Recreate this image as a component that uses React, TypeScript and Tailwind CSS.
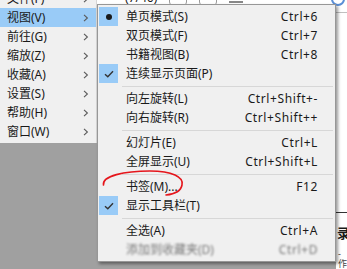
import React from "react";

type SubItem =
  | { kind: "sep" }
  | {
      kind: "item";
      label: string;
      shortcut?: string;
      mark?: "dot" | "check";
      blurred?: boolean;
    };

const leftItems = [
  "文件(F)",
  "视图(V)",
  "前往(G)",
  "缩放(Z)",
  "收藏(A)",
  "设置(S)",
  "帮助(H)",
  "窗口(W)",
];

const subItems: SubItem[] = [
  { kind: "item", label: "单页模式(S)", shortcut: "Ctrl+6", mark: "dot" },
  { kind: "item", label: "双页模式(F)", shortcut: "Ctrl+7" },
  { kind: "item", label: "书籍视图(B)", shortcut: "Ctrl+8" },
  { kind: "item", label: "连续显示页面(P)", mark: "check" },
  { kind: "sep" },
  { kind: "item", label: "向左旋转(L)", shortcut: "Ctrl+Shift+-" },
  { kind: "item", label: "向右旋转(R)", shortcut: "Ctrl+Shift++" },
  { kind: "sep" },
  { kind: "item", label: "幻灯片(E)", shortcut: "Ctrl+L" },
  { kind: "item", label: "全屏显示(U)", shortcut: "Ctrl+Shift+L" },
  { kind: "sep" },
  { kind: "item", label: "书签(M)...", shortcut: "F12" },
  { kind: "item", label: "显示工具栏(T)", mark: "check" },
  { kind: "sep" },
  { kind: "item", label: "全选(A)", shortcut: "Ctrl+A" },
  { kind: "item", label: "添加到收藏夹(D)", shortcut: "Ctrl+D", blurred: true },
];

function Chevron() {
  return (
    <svg width="6" height="8" viewBox="0 0 6 8" className="text-[#5a5a5a]">
      <path d="M1 0.8 L4.4 4 L1 7.2" fill="none" stroke="currentColor" strokeWidth="1.1" />
    </svg>
  );
}

function Mark({ type }: { type?: "dot" | "check" }) {
  if (!type) return <div className="w-[19px] h-[19px]" />;
  return (
    <div className="w-[19px] h-[19px] bg-[#99cbf7] flex items-center justify-center">
      {type === "dot" ? (
        <div className="w-[6px] h-[6px] rounded-full bg-[#1a1a1a]" />
      ) : (
        <svg width="10" height="8" viewBox="0 0 10 8">
          <path d="M1 4.2 L3.8 6.8 L9 1.2" fill="none" stroke="#333" strokeWidth="1.4" />
        </svg>
      )}
    </div>
  );
}

export default function App() {
  return (
    <div
      className="relative w-[347px] h-[269px] overflow-hidden bg-[#a0a0a0] text-[#1a1a1a]"
      style={{ fontFamily: '"Noto Sans", "Noto Sans CJK SC", sans-serif' }}
    >
      {/* application behind the menus */}
      <div className="flex flex-col h-full">
        <div className="h-[13px] bg-white border-b border-[#c0c0c0] flex items-start gap-3 pl-[125px] overflow-hidden">
          <span className="text-[12px] -mt-[10px] leading-[16px]">(7/46)</span>
          <div className="w-[18px] h-[18px] -mt-[12px] border border-[#9a9a9a] rounded-sm" />
          <div className="w-[18px] h-[18px] -mt-[12px] border border-[#9a9a9a] rounded-sm" />
          <div className="w-[14px] h-[2px] mt-[1px] bg-[#888]" />
          <div className="ml-auto mr-[2px] w-[14px] h-[14px] -mt-[8px] rounded-full border-2 border-[#5b8fd6]" />
        </div>
        <div className="flex flex-1">
          <div className="flex-1 bg-[#a0a0a0]" />
          <div className="w-[11px] bg-white flex flex-col">
            <div className="h-[199px]" />
            <div className="h-[1px] bg-[#333]" />
            <div className="mt-[13px] text-[13px] font-bold leading-[14px] pl-[1px]">录</div>
            <div className="mt-auto text-[9px] leading-[10px] pl-[2px] text-[#444]">- 作</div>
          </div>
        </div>
      </div>

      {/* main menu */}
      <div className="absolute left-0 top-[-11px] w-[97px] bg-[#f0f0f0] border-r border-[#d6d6d6] pb-[2px]">
        {leftItems.map((label, i) => (
          <div
            key={label}
            className={`h-[19px] flex items-center pl-[7px] pr-[7px] ${
              i === 1 ? "bg-[#99cbf7]" : ""
            }`}
          >
            <span className="flex-1 text-[12px] leading-none whitespace-nowrap">{label}</span>
            <Chevron />
          </div>
        ))}
      </div>

      {/* view submenu */}
      <div className="absolute left-[97px] top-[4px] w-[239px] bg-[#f0f0f0] border border-[#979797] py-[2px] shadow-[2px_2px_3px_rgba(0,0,0,0.4)]">
        {subItems.map((it, i) =>
          it.kind === "sep" ? (
            <div key={i} className="h-[6px] flex items-center pl-[24px] pr-[2px]">
              <div className="h-[1px] w-full bg-[#d7d7d7]" />
            </div>
          ) : (
            <div
              key={i}
              className={`h-[19px] flex items-center pl-[1px] pr-[17px] ${
                it.blurred ? "blur-[1px] text-[#777]" : ""
              }`}
            >
              <Mark type={it.mark} />
              <span className="ml-[8px] flex-1 text-[12px] leading-none whitespace-nowrap">
                {it.label}
              </span>
              {it.shortcut && (
                <span className="text-[12px] leading-none tracking-[0.6px] whitespace-nowrap">
                  {it.shortcut}
                </span>
              )}
            </div>
          )
        )}
      </div>

      {/* red annotation stroke */}
      <svg className="absolute left-0 top-0 pointer-events-none" width="347" height="269">
        <path
          d="M103.5 185 C102 176, 124 171, 150 171 C172 171, 184 177, 182 185 C181 191, 175 194, 166 195"
          fill="none"
          stroke="#e5161c"
          strokeWidth="1.6"
          strokeLinecap="round"
        />
      </svg>
    </div>
  );
}
